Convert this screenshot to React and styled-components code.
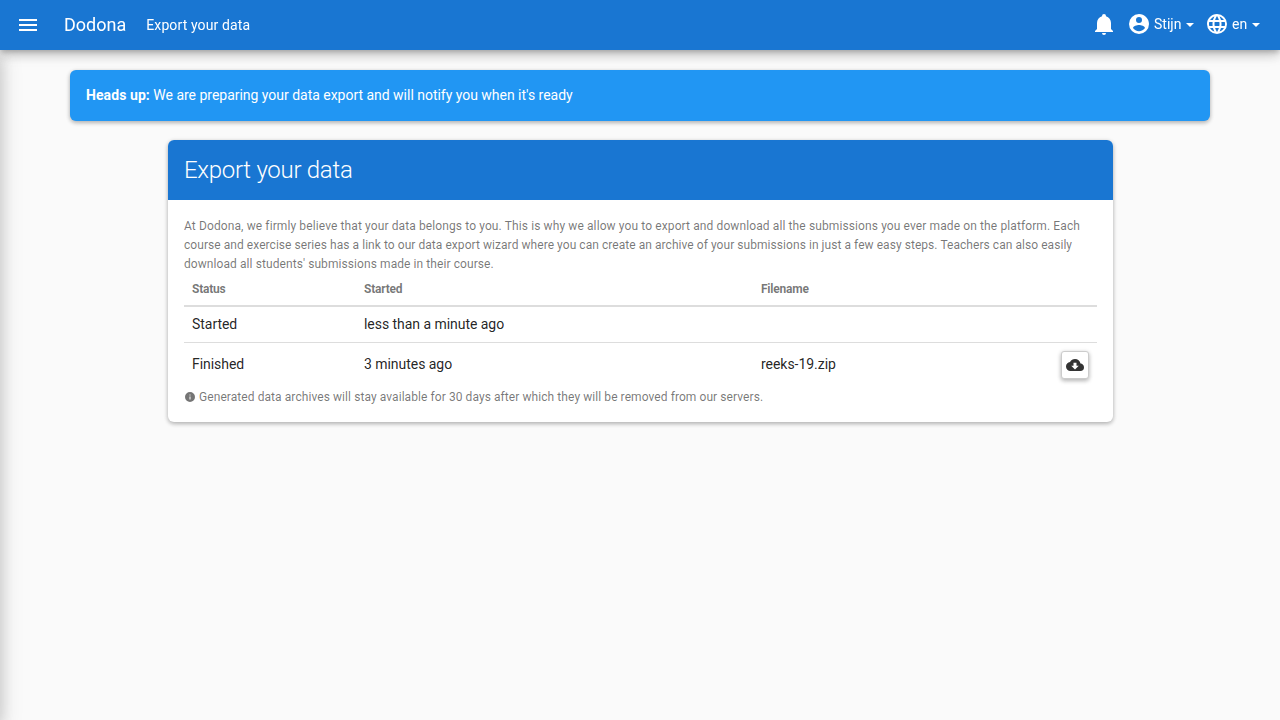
import React from "react";
import styled, { createGlobalStyle } from "styled-components";

const GlobalStyle = createGlobalStyle`
  *, *::before, *::after { box-sizing: border-box; }
  html, body { margin: 0; height: 100%; overflow: hidden; }
  body {
    background: #fafafa;
    color: rgba(0, 0, 0, 0.87);
    font-family: Roboto, "Liberation Sans", sans-serif;
    font-size: 14px;
    line-height: 20px;
  }
`;

const icons = {
  menu: "M3,6H21V8H3V6M3,11H21V13H3V11M3,16H21V18H3V16Z",
  bell: "M21,19V20H3V19L5,17V11C5,7.9 7.03,5.17 10,4.29C10,4.19 10,4.1 10,4A2,2 0 0,1 12,2A2,2 0 0,1 14,4C14,4.1 14,4.19 14,4.29C16.97,5.17 19,7.9 19,11V17L21,19M14,21A2,2 0 0,1 12,23A2,2 0 0,1 10,21",
  account:
    "M12,19.2C9.5,19.2 7.29,17.92 6,16C6.03,14 10,12.9 12,12.9C14,12.9 17.97,14 18,16C16.71,17.92 14.5,19.2 12,19.2M12,5A3,3 0 0,1 15,8A3,3 0 0,1 12,11A3,3 0 0,1 9,8A3,3 0 0,1 12,5M12,2A10,10 0 0,0 2,12A10,10 0 0,0 12,22A10,10 0 0,0 22,12C22,6.47 17.5,2 12,2Z",
  web: "M16.36,14C16.44,13.34 16.5,12.68 16.5,12C16.5,11.32 16.44,10.66 16.36,10H19.74C19.9,10.64 20,11.31 20,12C20,12.69 19.9,13.36 19.74,14M14.59,19.56C15.19,18.45 15.65,17.25 15.97,16H18.92C17.96,17.65 16.43,18.93 14.59,19.56M14.34,14H9.66C9.56,13.34 9.5,12.68 9.5,12C9.5,11.32 9.56,10.65 9.66,10H14.34C14.43,10.65 14.5,11.32 14.5,12C14.5,12.68 14.43,13.34 14.34,14M12,19.96C11.17,18.76 10.5,17.43 10.09,16H13.91C13.5,17.43 12.83,18.76 12,19.96M8,8H5.08C6.03,6.34 7.57,5.06 9.4,4.44C8.8,5.55 8.35,6.75 8,8M5.08,16H8C8.35,17.25 8.8,18.45 9.4,19.56C7.57,18.93 6.03,17.65 5.08,16M4.26,14C4.1,13.36 4,12.69 4,12C4,11.31 4.1,10.64 4.26,10H7.64C7.56,10.66 7.5,11.32 7.5,12C7.5,12.68 7.56,13.34 7.64,14M12,4.03C12.83,5.23 13.5,6.57 13.91,8H10.09C10.5,6.57 11.17,5.23 12,4.03M18.92,8H15.97C15.65,6.75 15.19,5.55 14.59,4.44C16.43,5.07 17.96,6.34 18.92,8M12,2C6.47,2 2,6.5 2,12A10,10 0 0,0 12,22A10,10 0 0,0 22,12A10,10 0 0,0 12,2Z",
  download:
    "M17,13L12,18L7,13H10V9H14V13M19.35,10.03C18.67,6.59 15.64,4 12,4C9.11,4 6.6,5.64 5.35,8.03C2.34,8.36 0,10.9 0,14A6,6 0 0,0 6,20H19A5,5 0 0,0 24,15C24,12.36 21.95,10.22 19.35,10.03Z",
  info: "M13,9H11V7H13M13,17H11V11H13M12,2A10,10 0 0,0 2,12A10,10 0 0,0 12,22A10,10 0 0,0 22,12A10,10 0 0,0 12,2Z",
};

const Svg = styled.svg`
  display: block;
  flex: none;
  width: ${(p) => p.$size}px;
  height: ${(p) => p.$size}px;
  fill: currentColor;
`;

const Icon = ({ name, size = 24 }) => (
  <Svg viewBox="0 0 24 24" $size={size} aria-hidden="true">
    <path d={icons[name]} />
  </Svg>
);

const Navbar = styled.header`
  position: relative;
  z-index: 2;
  display: flex;
  align-items: center;
  height: 50px;
  padding: 0 20px 0 16px;
  background: #1976d2;
  color: #fff;
  box-shadow: 0 6px 10px 0 rgba(0, 0, 0, 0.14), 0 1px 18px 0 rgba(0, 0, 0, 0.12),
    0 3px 5px -1px rgba(0, 0, 0, 0.2);
`;

const Brand = styled.a`
  margin-left: 24px;
  font-size: 18px;
`;

const Crumb = styled.span`
  margin-left: 20px;
  letter-spacing: 0.12px;
`;

const NavActions = styled.nav`
  display: flex;
  align-items: center;
  height: 48px;
  margin: 0 0 2px auto;
`;

const NavItem = styled.a`
  display: flex;
  align-items: center;
  width: ${(p) => p.$width}px;
  margin-left: ${(p) => p.$gap || 0}px;
`;

const NavLabel = styled.span`
  margin-left: 3px;
`;

const Caret = styled.span`
  margin: 2px 0 0 auto;
  border-top: 4px solid;
  border-left: 4px solid transparent;
  border-right: 4px solid transparent;
`;

/* Closed navigation drawer: sits just outside the viewport, its shadow shows. */
const Drawer = styled.aside`
  position: fixed;
  z-index: 1;
  top: 50px;
  bottom: 0;
  left: -280px;
  width: 280px;
  background: #fff;
  box-shadow: 0 8px 22px 2px rgba(0, 0, 0, 0.12), 0 3px 14px 2px rgba(0, 0, 0, 0.12);
`;

const Container = styled.main`
  width: 1140px;
  margin: 20px auto 0;
`;

const raised = `
  box-shadow: 0 2px 4px 0 rgba(0, 0, 0, 0.2), 0 1px 5px 0 rgba(0, 0, 0, 0.14);
`;

const Alert = styled.div`
  height: 51px;
  padding: 15px 16px;
  border-radius: 6px;
  background: #2196f3;
  color: #fff;
  ${raised}
`;

const AlertLead = styled.strong`
  letter-spacing: 0.08px;
`;

const AlertText = styled.span`
  letter-spacing: -0.02px;
`;

const Card = styled.section`
  width: 945px;
  height: 282px;
  margin: 19px 0 0 98px;
  border-radius: 6px;
  background: #fff;
  overflow: hidden;
  ${raised}
`;

const CardTitle = styled.h2`
  display: flex;
  align-items: center;
  height: 60px;
  margin: 0;
  padding: 0 16px;
  background: #1976d2;
  color: #fff;
  font-size: 24px;
  font-weight: 300;
  letter-spacing: -0.28px;
`;

const CardBody = styled.div`
  padding: 17px 16px 16px;
`;

const HelpText = styled.p`
  margin: 0;
  color: rgba(0, 0, 0, 0.54);
  font-size: 12px;
  line-height: 19px;
`;

const Line = styled.span`
  display: block;
  white-space: nowrap;
  letter-spacing: ${(p) => p.$tracking}px;
`;

const Note = styled(HelpText)`
  display: flex;
  align-items: center;
  gap: 3px;
  margin-top: 1px;
  letter-spacing: 0.075px;

  svg {
    margin-bottom: 2px;
  }
`;

const Table = styled.table`
  width: 100%;
  table-layout: fixed;
  border-collapse: separate;
  border-spacing: 0;
`;

const HeadCell = styled.th`
  width: ${(p) => p.$width};
  height: 33px;
  padding: 0 8px 1px;
  border-bottom: 2px solid #ddd;
  color: rgba(0, 0, 0, 0.54);
  font-size: 12px;
  font-weight: 700;
  letter-spacing: -0.22px;
  text-align: left;
`;

const Cell = styled.td`
  height: ${(p) => p.$height}px;
  padding: 0 8px 2px;
  border-top: ${(p) => (p.$line ? "1px solid #ddd" : "0")};
  letter-spacing: -0.04px;
`;

const ActionCell = styled(Cell)`
  padding: 0 8px;
  text-align: right;
`;

const DownloadButton = styled.button`
  display: inline-flex;
  align-items: center;
  justify-content: center;
  width: 28px;
  height: 28px;
  padding: 0;
  border: 1px solid #ccc;
  border-radius: 3px;
  background: #fff;
  color: #333;
  vertical-align: middle;
  ${raised}
`;

export default function App() {
  return (
    <>
      <GlobalStyle />
      <Navbar>
        <Icon name="menu" />
        <Brand>Dodona</Brand>
        <Crumb>Export your data</Crumb>
        <NavActions>
          <NavItem $width={35}>
            <Icon name="bell" />
          </NavItem>
          <NavItem $width={67}>
            <Icon name="account" />
            <NavLabel>Stijn</NavLabel>
            <Caret />
          </NavItem>
          <NavItem $width={55} $gap={11}>
            <Icon name="web" />
            <NavLabel>en</NavLabel>
            <Caret />
          </NavItem>
        </NavActions>
      </Navbar>
      <Drawer />
      <Container>
        <Alert>
          <AlertLead>Heads up:</AlertLead>{" "}
          <AlertText>We are preparing your data export and will notify you when it's ready</AlertText>
        </Alert>
        <Card>
          <CardTitle>Export your data</CardTitle>
          <CardBody>
            <HelpText>
              <Line $tracking={0.11}>
                At Dodona, we firmly believe that your data belongs to you. This is why we allow you to export and
                download all the submissions you ever made on the platform. Each
              </Line>
              <Line $tracking={0.054}>
                course and exercise series has a link to our data export wizard where you can create an archive of
                your submissions in just a few easy steps. Teachers can also easily
              </Line>
              <Line $tracking={0.08}>download all students' submissions made in their course.</Line>
            </HelpText>
            <Table>
              <thead>
                <tr>
                  <HeadCell $width="172px">Status</HeadCell>
                  <HeadCell $width="397px">Started</HeadCell>
                  <HeadCell>Filename</HeadCell>
                  <HeadCell $width="76px" />
                </tr>
              </thead>
              <tbody>
                <tr>
                  <Cell $height={35}>Started</Cell>
                  <Cell>less than a minute ago</Cell>
                  <Cell />
                  <Cell />
                </tr>
                <tr>
                  <Cell $line $height={45}>Finished</Cell>
                  <Cell $line>3 minutes ago</Cell>
                  <Cell $line>reeks-19.zip</Cell>
                  <ActionCell $line>
                    <DownloadButton aria-label="Download">
                      <Icon name="download" size={18} />
                    </DownloadButton>
                  </ActionCell>
                </tr>
              </tbody>
            </Table>
            <Note>
              <Icon name="info" size={12} />
              Generated data archives will stay available for 30 days after which they will be removed from our
              servers.
            </Note>
          </CardBody>
        </Card>
      </Container>
    </>
  );
}
